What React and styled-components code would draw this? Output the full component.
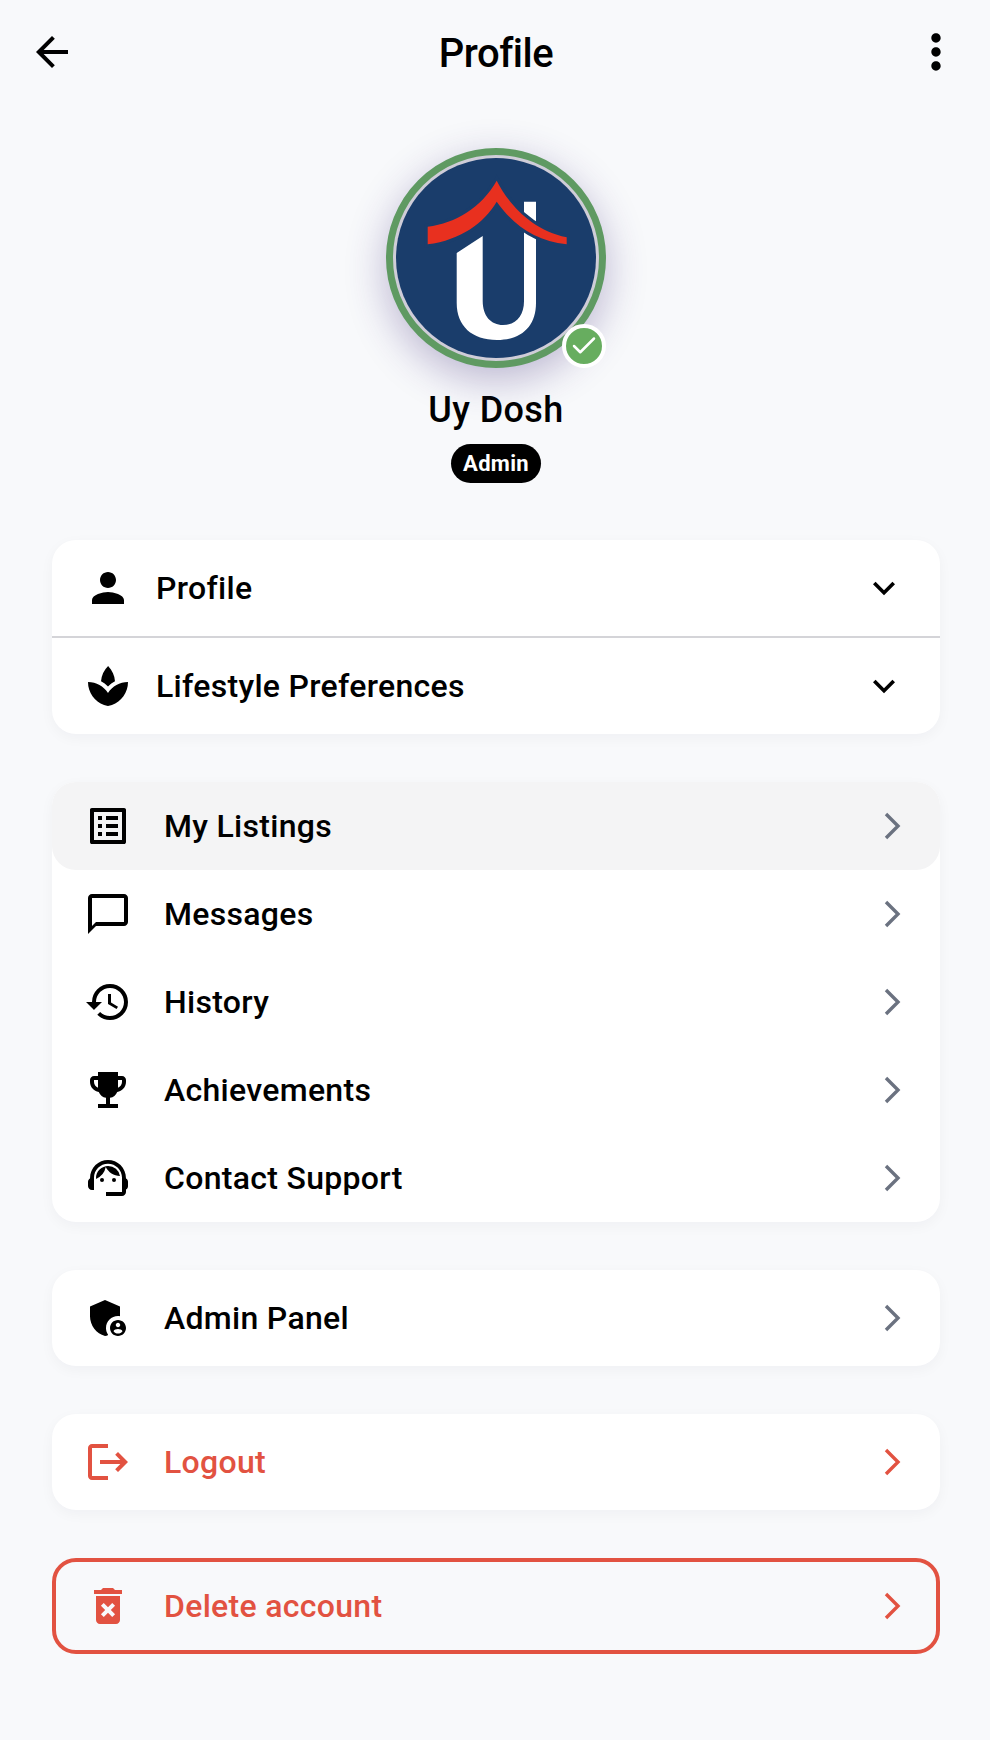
import styled, { createGlobalStyle } from "styled-components";
import {
  MdArrowBack,
  MdMoreVert,
  MdPerson,
  MdSpa,
  MdExpandMore,
  MdOutlineListAlt,
  MdChatBubbleOutline,
  MdHistory,
  MdEmojiEvents,
  MdOutlineSupportAgent,
  MdAdminPanelSettings,
  MdLogout,
  MdDeleteForever,
} from "react-icons/md";
import { ChevronRight, Check } from "lucide-react";

const RED = "#e25241";

const GlobalStyle = createGlobalStyle`
  body {
    margin: 0;
    background: #f8f9fb;
    font-family: Roboto, "Liberation Sans", sans-serif;
    color: #000;
  }
`;

function Logo() {
  const roof =
    "M100.7 22.7 C112 45 135 72 170.7 79.3 L170.7 86.3 C140 83 118 68 100.7 43.7 C88 65 65 82 31.7 86.3 L31.7 68.7 C60 65 85 50 100.7 22.7 Z";
  return (
    <LogoSvg viewBox="0 0 200 200">
      <rect width="200" height="200" fill="#1a3d6b" />
      <path
        d="M60.7 95 L86.7 78 L86.7 143 C86.7 158 95 167 107 167 C120 167 128 158 128 143 L128 43.7 L140 43.7 L140 145 C140 168 126 182 101 182 C76 182 60.7 168 60.7 145 Z"
        fill="#fff"
      />
      <path d={roof} fill="#e8301f" stroke="#1a3d6b" strokeWidth="6" paintOrder="stroke" />
    </LogoSvg>
  );
}

function MenuRow({ icon: Icon, label, active, danger }) {
  return (
    <Row $active={active} $danger={danger}>
      <Icon size={48} />
      <RowLabel>{label}</RowLabel>
      <Arrow size={48} strokeWidth={1.7} strokeLinecap="butt" strokeLinejoin="miter" $danger={danger} />
    </Row>
  );
}

function SectionRow({ icon: Icon, label }) {
  return (
    <Section>
      <Icon size={48} />
      <SectionLabel>{label}</SectionLabel>
      <MdExpandMore size={44} />
    </Section>
  );
}

export default function App() {
  return (
    <Page>
      <GlobalStyle />
      <Header>
        <MdArrowBack size={48} />
        <Title>Profile</Title>
        <MdMoreVert size={56} />
      </Header>

      <Hero>
        <Avatar>
          <Logo />
          <Verified>
            <Check size={30} strokeWidth={2} color="#fff" />
          </Verified>
        </Avatar>
        <Name>Uy Dosh</Name>
        <RolePill>Admin</RolePill>
      </Hero>

      <Cards>
        <Card>
          <SectionRow icon={MdPerson} label="Profile" />
          <Divider />
          <SectionRow icon={MdSpa} label="Lifestyle Preferences" />
        </Card>

        <Card>
          <MenuRow icon={MdOutlineListAlt} label="My Listings" active />
          <MenuRow icon={MdChatBubbleOutline} label="Messages" />
          <MenuRow icon={MdHistory} label="History" />
          <MenuRow icon={MdEmojiEvents} label="Achievements" />
          <MenuRow icon={MdOutlineSupportAgent} label="Contact Support" />
        </Card>

        <Card>
          <SingleRow>
            <MenuRow icon={MdAdminPanelSettings} label="Admin Panel" />
          </SingleRow>
        </Card>

        <Card>
          <SingleRow>
            <MenuRow icon={MdLogout} label="Logout" danger />
          </SingleRow>
        </Card>

        <OutlineCard>
          <MenuRow icon={MdDeleteForever} label="Delete account" danger />
        </OutlineCard>
      </Cards>
    </Page>
  );
}

const Page = styled.div`
  width: 990px;
  min-height: 1740px;
  box-sizing: border-box;
`;

const Header = styled.header`
  height: 104px;
  padding: 0 26px 0 28px;
  display: flex;
  align-items: center;
  justify-content: space-between;
`;

const Title = styled.h1`
  margin: 0 0 0 8px;
  font-size: 40px;
  font-weight: 500;
  line-height: 48px;
  letter-spacing: -0.5px;
  transform: translateY(2px);
`;

const Hero = styled.section`
  margin-top: 44px;
  padding-left: 2px;
  display: flex;
  flex-direction: column;
  align-items: center;
`;

const Avatar = styled.div`
  position: relative;
  width: 220px;
  height: 220px;
  box-sizing: border-box;
  padding: 3px;
  border: 7px solid #5f9a62;
  border-radius: 50%;
  background: #cfcdd8;
  box-shadow: 0 12px 40px rgba(60, 40, 120, 0.32);
`;

const LogoSvg = styled.svg`
  display: block;
  width: 100%;
  height: 100%;
  border-radius: 50%;
`;

const Verified = styled.div`
  position: absolute;
  right: -7px;
  bottom: -7px;
  width: 36px;
  height: 36px;
  border: 4px solid #fff;
  border-radius: 50%;
  background: #67ad5f;
  display: flex;
  align-items: center;
  justify-content: center;
`;

const Name = styled.div`
  margin-top: 19px;
  font-size: 36px;
  font-weight: 500;
  line-height: 46px;
  letter-spacing: 0.4px;
`;

const RolePill = styled.div`
  margin-top: 11px;
  height: 39px;
  padding: 0 12px;
  border-radius: 20px;
  background: #000;
  color: #fff;
  font-size: 22px;
  font-weight: 700;
  line-height: 39px;
  letter-spacing: 0.3px;
`;

const Cards = styled.main`
  margin: 57px 50px 0 52px;
  display: flex;
  flex-direction: column;
  gap: 48px;
`;

const Card = styled.div`
  background: #fff;
  border-radius: 24px;
  box-shadow: 0 4px 14px rgba(20, 30, 60, 0.04);
`;

const OutlineCard = styled.div`
  height: 96px;
  box-sizing: border-box;
  border: 4px solid ${RED};
  border-radius: 24px;
  display: flex;
  align-items: center;

  & > div {
    flex: 1;
    margin: 0 -4px;
  }
`;

const SingleRow = styled.div`
  height: 96px;
  display: flex;
  align-items: center;

  & > div {
    flex: 1;
  }
`;

const Section = styled.div`
  height: 96px;
  padding: 0 34px 0 32px;
  display: flex;
  align-items: center;
`;

const SectionLabel = styled.span`
  flex: 1;
  margin-left: 24px;
  font-size: 32px;
  font-weight: 500;
  letter-spacing: 0.3px;
`;

const Divider = styled.div`
  height: 2px;
  background: #d4d4d8;
`;

const Row = styled.div`
  height: 88px;
  padding: 0 24px 0 32px;
  display: flex;
  align-items: center;
  border-radius: 24px;
  background: ${(p) => (p.$active ? "#f4f4f5" : "transparent")};
  color: ${(p) => (p.$danger ? RED : "#000")};
`;

const RowLabel = styled.span`
  flex: 1;
  margin-left: 32px;
  font-size: 32px;
  font-weight: 500;
  letter-spacing: 0.3px;
`;

const Arrow = styled(ChevronRight)`
  color: ${(p) => (p.$danger ? RED : "#6b7280")};
`;
